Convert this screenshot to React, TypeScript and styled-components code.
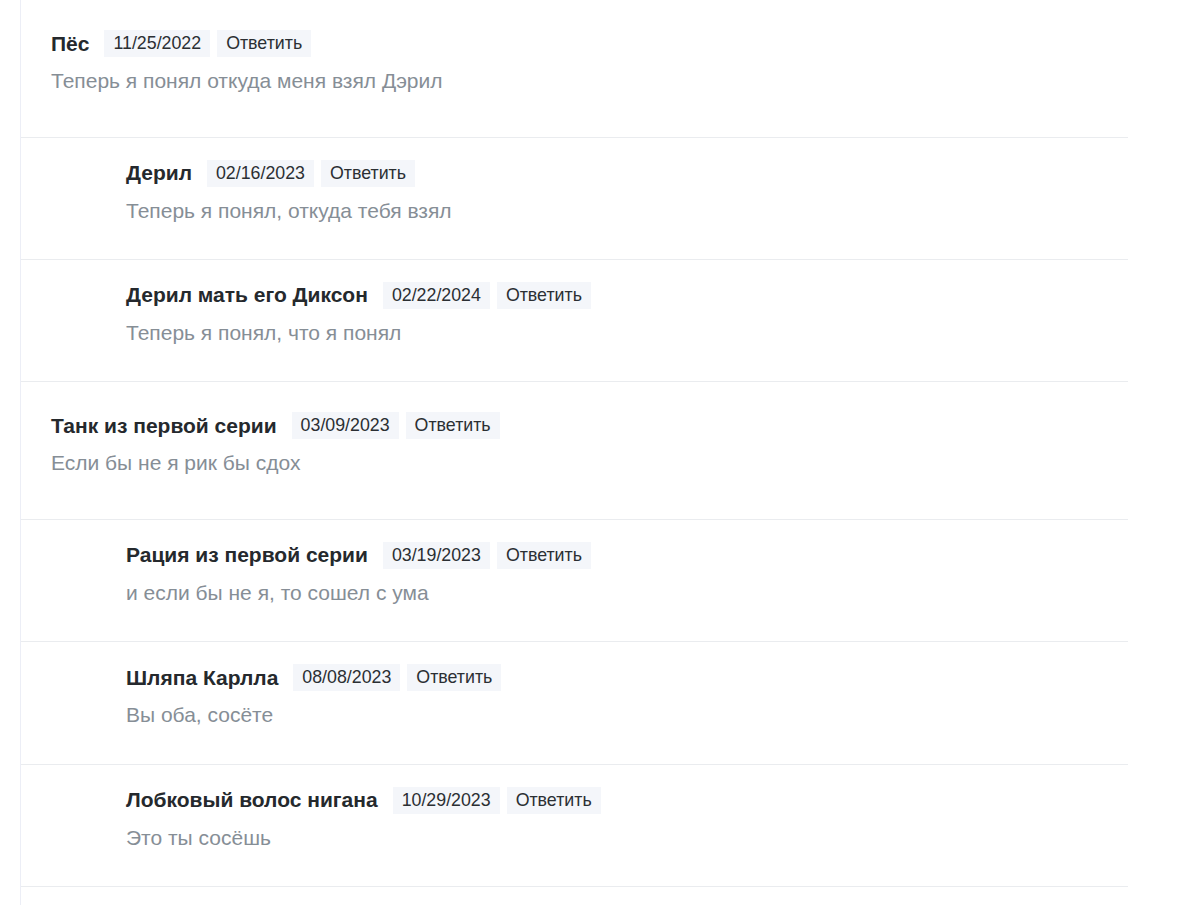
import React from 'react'
import styled, { createGlobalStyle } from 'styled-components'

const GlobalStyle = createGlobalStyle`
  body {
    margin: 0;
    background: #fff;
    font-family: 'Liberation Sans', Arial, sans-serif;
  }
`

const Page = styled.div`
  padding-left: 20px;
  width: 1108px;
`

const Thread = styled.div`
  border-left: 1px solid #eceef6;
`

const CommentRow = styled.div<{ $nested: boolean }>`
  padding: ${(p) => (p.$nested ? '22px 0 35.4px 105px' : '30px 0 42.6px 30px')};
  border-bottom: 1px solid #eaecef;
`

const Header = styled.div`
  display: flex;
  align-items: center;
  height: 27px;
`

const Author = styled.span`
  font-size: 21px;
  font-weight: 700;
  color: #25292d;
  margin-right: 15px;
`

const Tag = styled.span`
  font-size: 17.8px;
  line-height: 27px;
  padding: 0 9px;
  background: #f4f6fa;
  color: #2b2f33;
  margin-right: 7px;
`

const ReplyTag = styled(Tag).attrs({ as: 'button' })`
  border: 0;
  font-family: inherit;
  cursor: pointer;
`

const Body = styled.div`
  margin-top: 10px;
  font-size: 21px;
  line-height: 27px;
  color: #868e96;
`

type Comment = { author: string; date: string; text: string; nested: boolean }

const comments: Comment[] = [
  { author: 'Пёс', date: '11/25/2022', text: 'Теперь я понял откуда меня взял Дэрил', nested: false },
  { author: 'Дерил', date: '02/16/2023', text: 'Теперь я понял, откуда тебя взял', nested: true },
  { author: 'Дерил мать его Диксон', date: '02/22/2024', text: 'Теперь я понял, что я понял', nested: true },
  { author: 'Танк из первой серии', date: '03/09/2023', text: 'Если бы не я рик бы сдох', nested: false },
  { author: 'Рация из первой серии', date: '03/19/2023', text: 'и если бы не я, то сошел с ума', nested: true },
  { author: 'Шляпа Карлла', date: '08/08/2023', text: 'Вы оба, сосёте', nested: true },
  { author: 'Лобковый волос нигана', date: '10/29/2023', text: 'Это ты сосёшь', nested: true },
]

export default function App() {
  return (
    <Page>
      <GlobalStyle />
      <Thread>
        {comments.map((c) => (
          <CommentRow key={c.author} $nested={c.nested}>
            <Header>
              <Author>{c.author}</Author>
              <Tag>{c.date}</Tag>
              <ReplyTag>Ответить</ReplyTag>
            </Header>
            <Body>{c.text}</Body>
          </CommentRow>
        ))}
        <CommentRow $nested={false} />
      </Thread>
    </Page>
  )
}
